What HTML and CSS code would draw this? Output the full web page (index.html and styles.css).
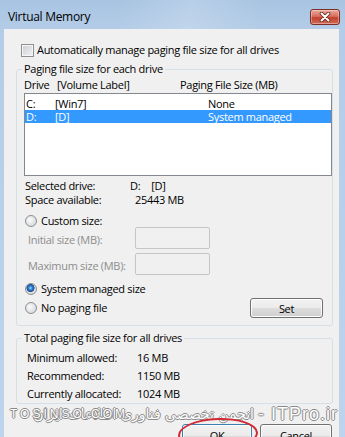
FILE: index.html
```html
<!DOCTYPE html>
<html>
<head>
<meta charset="utf-8">
<title>Virtual Memory</title>
<link rel="stylesheet" href="styles.css">
</head>
<body>
<div class="window">
  <div class="titlebar">
    <span class="title">Virtual Memory</span>
    <span class="close">
      <svg width="12" height="10" viewBox="0 0 12 10"><path d="M2.5 1.5 L9.5 8.5 M9.5 1.5 L2.5 8.5" stroke="#6a2219" stroke-width="3.6" stroke-linecap="round"/><path d="M2.5 1.5 L9.5 8.5 M9.5 1.5 L2.5 8.5" stroke="#fff" stroke-width="2" stroke-linecap="round"/></svg>
    </span>
  </div>
  <div class="client">
    <div class="auto"><span class="checkbox"></span><span>Automatically manage paging file size for all drives</span></div>

    <fieldset class="group g1">
      <legend>Paging file size for each drive</legend>
      <div class="list-head"><span class="c1">Drive</span><span class="c2">[Volume Label]</span><span>Paging File Size (MB)</span></div>
      <div class="list">
        <div class="row"><span class="d1">C:</span><span class="d2">[Win7]</span><span>None</span></div>
        <div class="row sel"><span class="d1">D:</span><span class="d2">[D]</span><span>System managed</span></div>
      </div>
      <div class="info first"><span class="k">Selected drive:</span><span>D:</span><span class="v2">[D]</span></div>
      <div class="info"><span class="k">Space available:</span><span class="vspace">25443 MB</span></div>

      <div class="opt custom"><span class="radio"></span><span>Custom size:</span></div>
      <div class="field"><span class="flabel">Initial size (MB):</span><span class="input"></span></div>
      <div class="field f2"><span class="flabel">Maximum size (MB):</span><span class="input"></span></div>
      <div class="opt sys"><span class="radio checked"></span><span>System managed size</span></div>
      <div class="lastrow">
        <div class="opt"><span class="radio"></span><span>No paging file</span></div>
        <button class="btn set">Set</button>
      </div>
    </fieldset>

    <fieldset class="group g2">
      <legend>Total paging file size for all drives</legend>
      <div class="trow"><span class="tk">Minimum allowed:</span><span>16 MB</span></div>
      <div class="trow"><span class="tk">Recommended:</span><span>1150 MB</span></div>
      <div class="trow"><span class="tk">Currently allocated:</span><span>1024 MB</span></div>
    </fieldset>

    <div class="buttons">
      <button class="btn ok">OK</button>
      <button class="btn cancel">Cancel</button>
    </div>
  </div>

  <div class="watermark">
    <span class="wm-fa" dir="rtl">انجمن تخصصی فناوری اطلاعات ایران</span><span class="wm-dash">-</span><span class="wm-en">ITPro.ir</span>
    <span class="wm-site">TOSINSO.COM</span>
  </div>
  <div class="annot"></div>
</div>
</body>
</html>
```
FILE: styles.css
```css
* { box-sizing: border-box; }
html, body { margin: 0; padding: 0; }
body {
  font-family: "Open Sans", "DejaVu Sans", sans-serif;
  font-size: 11px;
  letter-spacing: -0.3px;
  color: #000;
  background: #bfd5ec;
}

.window {
  position: relative;
  width: 345px;
  height: 437px;
  overflow: hidden;
  display: flex;
  flex-direction: column;
  background: linear-gradient(180deg, #a8c4e2 0, #b4cce7 29px, #bed4ec 100%);
}

.titlebar {
  flex: none;
  height: 29px;
  display: flex;
  justify-content: space-between;
  align-items: flex-start;
  padding: 0 5px 0 8px;
  background: linear-gradient(100deg, rgba(255,255,255,0) 35%, rgba(255,255,255,0.18) 55%, rgba(255,255,255,0) 75%);
}
.title {
  margin-top: 9px;
  font-size: 12px;
  line-height: 16px;
}
.close {
  margin-top: 9px;
  width: 30px;
  height: 16px;
  border: 1px solid #7c2d26;
  border-radius: 3px;
  background: linear-gradient(#e9a99d 0, #d7705f 45%, #c2402f 55%, #d06c55 100%);
  box-shadow: inset 0 0 0 1px rgba(255,255,255,0.35);
  display: flex;
  align-items: center;
  justify-content: center;
}

.client {
  flex: 1;
  min-height: 0;
  margin: 0 6px 0 4px;
  background: #f0f0f0;
  display: flex;
  flex-direction: column;
}

.auto {
  flex: none;
  display: flex;
  align-items: center;
  height: 14px;
  line-height: 14px;
  margin: 14px 0 0 17px;
}
.checkbox {
  width: 13px;
  height: 13px;
  margin-right: 3px;
  border: 1px solid #8e8f8f;
  background: linear-gradient(135deg, #c9cdd3, #f3f3f3);
  box-shadow: inset 0 0 0 1px #f6f6f6;
}

.group {
  flex: none;
  margin: 0 0 0 12px;
  width: 317px;
  min-width: 0;
  border: 1px solid #d5dfe5;
  border-radius: 3px;
  padding: 0 0 0 7px;
}
.group legend {
  padding: 0 2px;
  margin-left: -2px;
  font-size: 11px;
  line-height: 14px;
}
.g1 { margin-top: 5px; padding-bottom: 7px; }
.g2 { margin-top: 5px; padding-top: 4px; padding-bottom: 0; }

.list-head {
  display: flex;
  margin-top: 2px;
  height: 14px;
  line-height: 14px;
}
.list-head .c1 { width: 33px; }
.list-head .c2 { width: 123px; }

.list {
  margin-top: 1px;
  width: 308px;
  height: 83px;
  border: 1px solid #828790;
  background: #fff;
  padding-top: 3px;
}
.row {
  display: flex;
  height: 13px;
  line-height: 13px;
  padding-left: 1px;
}
.row .d1 { width: 29px; }
.row .d2 { width: 153px; }
.row.sel { background: #3399ff; color: #fff; }

.info {
  display: flex;
  height: 14px;
  line-height: 14px;
  padding-left: 1px;
}
.info.first { margin-top: 3px; }
.info .k { width: 105px; }
.info .v2 { margin-left: 11px; }
.info .vspace { padding-left: 5px; }

.opt {
  display: flex;
  align-items: center;
  height: 14px;
  line-height: 14px;
  padding-left: 1px;
}
.radio {
  flex: none;
  width: 12px;
  height: 12px;
  margin-right: 4px;
  border-radius: 50%;
  border: 1px solid #8e8f8f;
  background: radial-gradient(circle at 40% 40%, #fbfbfb 0, #e6e7e9 45%, #cdd0d5 100%);
}
.radio.checked {
  background:
    radial-gradient(circle at 45% 40%, #a9dcff 0, #3b8ee0 1.6px, #1d5aa6 3.2px, #2a4f80 3.8px, rgba(0,0,0,0) 4.3px),
    radial-gradient(circle at 40% 40%, #fbfbfb 0, #e6e7e9 45%, #cdd0d5 100%);
}
.opt.custom { margin-top: 7px; height: 13px; line-height: 13px; }
.opt.sys { margin-top: 7px; }

.field {
  display: flex;
  align-items: center;
  height: 22px;
}
.field.f2 { margin-top: 4px; }
.flabel {
  width: 107px;
  margin-left: 4px;
  padding-top: 2px;
  color: #8d8d8d;
}
.input {
  width: 75px;
  height: 22px;
  border: 1px solid #c6c6c6;
  border-radius: 2px;
  background: #f0f0f0;
}

.lastrow {
  display: flex;
  justify-content: space-between;
  align-items: center;
  height: 20px;
  margin-top: 2px;
}

.btn {
  font-family: inherit;
  font-size: 11px;
  letter-spacing: -0.3px;
  color: #000;
  padding: 0;
  border: 1px solid #707070;
  border-radius: 3px;
  background: linear-gradient(#f2f2f2 0, #ebebeb 50%, #dddddd 50%, #cfcfcf 100%);
  box-shadow: inset 0 0 0 1px #fcfcfc;
}
.set { width: 73px; height: 20px; margin-right: 9px; }

.trow {
  display: flex;
  height: 18px;
  line-height: 18px;
  padding-left: 3px;
}
.tk { width: 110px; }

.buttons {
  flex: none;
  display: flex;
  justify-content: flex-end;
  gap: 8px;
  margin-top: 20px;
  padding-right: 7px;
}
.ok { width: 70px; height: 23px; border-color: #3c7fb1; }
.cancel { width: 72px; height: 23px; }

.watermark {
  position: absolute;
  left: 0;
  top: 402px;
  width: 345px;
  height: 24px;
  display: flex;
  justify-content: flex-end;
  align-items: center;
  padding-right: 7px;
  color: #fff;
  letter-spacing: 0;
  white-space: nowrap;
  text-shadow: -1px 0 #8a8a8a, 1px 0 #8a8a8a, 0 -1px #8a8a8a, 0 1px #8a8a8a;
}
.wm-fa { flex: none; font-family: "DejaVu Sans", sans-serif; font-size: 14px; }
.wm-dash { flex: none; font-family: "Liberation Sans", sans-serif; font-size: 18px; margin: 0 7px 0 4px; }
.wm-en { flex: none; font-family: "Liberation Sans", sans-serif; font-size: 18px; letter-spacing: 1px; }
.wm-site {
  position: absolute;
  left: 10px;
  top: 5px;
  font-family: "Liberation Sans", sans-serif;
  font-size: 12px;
  letter-spacing: 3px;
}

.annot {
  position: absolute;
  left: 178px;
  top: 418px;
  width: 80px;
  height: 32px;
  border: 2px solid #d22a35;
  border-radius: 50%;
  transform: rotate(-2deg);
}
```
